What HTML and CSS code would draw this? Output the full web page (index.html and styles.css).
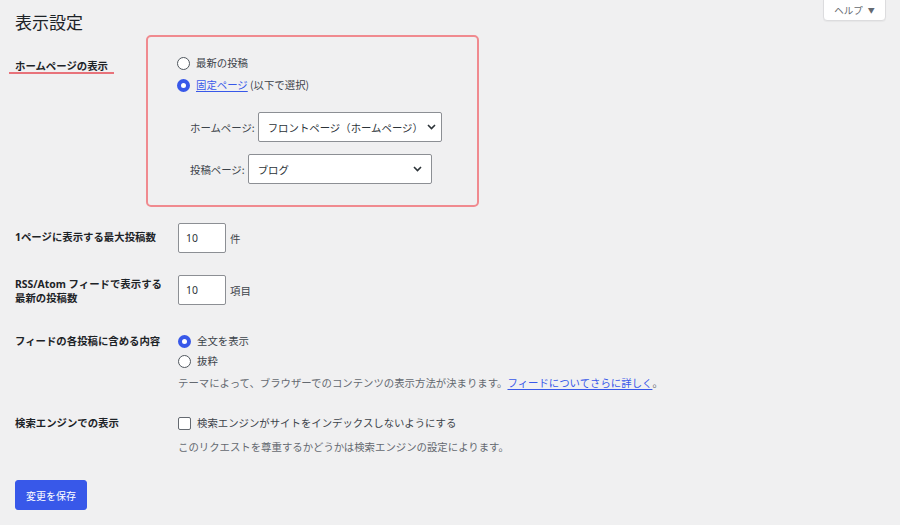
FILE: index.html
```html
<!DOCTYPE html>
<html lang="ja">
<head>
<meta charset="utf-8">
<title>表示設定</title>
<link rel="stylesheet" href="styles.css">
</head>
<body>
<header class="header">
  <h1 class="title">表示設定</h1>
  <button class="help" type="button">ヘルプ <span class="help-arrow">▼</span></button>
</header>

<form class="settings">
  <div class="row-home">
    <div class="home-label"><span class="underlined">ホームページの表示</span></div>
    <div class="highlight-box">
      <label class="choice choice-home"><input type="radio" name="front" class="radio"> 最新の投稿</label>
      <label class="choice choice-home"><input type="radio" name="front" class="radio" checked> <a href="#" class="link">固定ページ</a>&nbsp;(以下で選択)</label>
      <div class="page-select first">
        <span class="select-label">ホームページ:</span>
        <div class="select wide">
          <span>フロントページ（ホームページ）</span>
          <svg class="chev" width="9" height="6" viewBox="0 0 9 6"><path d="M1 1 L4.5 4.5 L8 1" fill="none" stroke="#2c3338" stroke-width="1.6"/></svg>
        </div>
      </div>
      <div class="page-select second">
        <span class="select-label">投稿ページ:</span>
        <div class="select">
          <span>ブログ</span>
          <svg class="chev" width="9" height="6" viewBox="0 0 9 6"><path d="M1 1 L4.5 4.5 L8 1" fill="none" stroke="#2c3338" stroke-width="1.6"/></svg>
        </div>
      </div>
    </div>
  </div>

  <div class="row row-posts">
    <div class="row-label pt7">1ページに表示する最大投稿数</div>
    <div class="field field-inline">
      <input class="num" type="text" value="10"><span class="unit">件</span>
    </div>
  </div>

  <div class="row row-rss">
    <div class="row-label pt2">RSS/Atom フィードで表示する最新の投稿数</div>
    <div class="field field-inline">
      <input class="num" type="text" value="10"><span class="unit">項目</span>
    </div>
  </div>

  <div class="row row-feed">
    <div class="row-label pt3">フィードの各投稿に含める内容</div>
    <div class="field">
      <label class="choice"><input type="radio" name="feed" class="radio" checked> 全文を表示</label>
      <label class="choice"><input type="radio" name="feed" class="radio"> 抜粋</label>
      <p class="desc desc-feed">テーマによって、ブラウザーでのコンテンツの表示方法が決まります。<a href="#" class="link">フィードについてさらに詳しく</a>。</p>
    </div>
  </div>

  <div class="row row-search">
    <div class="row-label pt3">検索エンジンでの表示</div>
    <div class="field">
      <label class="choice"><input type="checkbox" class="check"> 検索エンジンがサイトをインデックスしないようにする</label>
      <p class="desc desc-search">このリクエストを尊重するかどうかは検索エンジンの設定によります。</p>
    </div>
  </div>

  <button class="save" type="button">変更を保存</button>
</form>
</body>
</html>
```

FILE: styles.css
```css
html, body {
  margin: 0;
  padding: 0;
  background: #f0f0f1;
}

body {
  font-family: "Noto Sans", "Noto Sans CJK JP", sans-serif;
  font-size: 10.4px;
  color: #3c434a;
  width: 900px;
  height: 525px;
  overflow: hidden;
}

.header {
  display: flex;
  justify-content: space-between;
  align-items: flex-start;
  padding: 0 14px 0 15px;
}

.title {
  margin: 12px 0 0;
  font-size: 17px;
  line-height: 20px;
  font-weight: 400;
  color: #1d2327;
  font-family: "Noto Sans CJK JP", sans-serif;
}

.help {
  margin-top: -1px;
  width: 63px;
  height: 22px;
  background: #fff;
  border: 1px solid #dcdcde;
  border-radius: 0 0 4px 4px;
  box-shadow: 0 1px 1px rgba(0,0,0,0.04);
  font-family: "Noto Sans CJK JP", sans-serif;
  font-size: 9.5px;
  color: #646970;
  padding: 0;
  line-height: 20px;
}

.help-arrow {
  font-size: 7px;
  margin-left: 3px;
  vertical-align: 1px;
}

.settings {
  padding-left: 15px;
}

/* Row 1 with highlight */
.row-home {
  display: flex;
  margin-top: 3px;
}

.home-label {
  width: 131px;
  flex-shrink: 0;
  padding-top: 23px;
  font-weight: 700;
  color: #1d2327;
  font-family: "Noto Sans CJK JP", sans-serif;
}

.underlined {
  display: inline-block;
  line-height: 13px;
  margin-left: -6px;
  padding: 0 6px 0 6px;
  border-bottom: 2px solid #e8727a;
}

.highlight-box {
  width: 333px;
  box-sizing: border-box;
  border: 2px solid #f08a8f;
  border-radius: 5px;
  padding: 15px 10px 21px 29px;
}

.choice {
  display: flex;
  align-items: center;
  height: 20px;
  line-height: 20px;
  color: #3c434a;
  font-family: "Noto Sans CJK JP", sans-serif;
  white-space: nowrap;
}

.choice-home {
  height: 22px;
  line-height: 22px;
}

.radio, .check {
  appearance: none;
  -webkit-appearance: none;
  margin: 0 6px 0 0;
  width: 13px;
  height: 13px;
  box-sizing: border-box;
  background: #fff;
  border: 1px solid #50575e;
  flex-shrink: 0;
}

.radio {
  border-radius: 50%;
}

.radio:checked {
  border: 4px solid #3858e9;
}

.check {
  border-radius: 2px;
  border-color: #646970;
}

.link {
  color: #3858e9;
  text-decoration: underline;
  text-underline-offset: 2px;
}

.page-select {
  display: flex;
  align-items: center;
  padding-left: 13px;
  color: #3c434a;
  font-family: "Noto Sans CJK JP", sans-serif;
}

.page-select.first {
  margin-top: 16px;
}

.page-select.second {
  margin-top: 12px;
}

.select-label {
  margin-right: 3px;
}

.select {
  display: flex;
  align-items: center;
  justify-content: space-between;
  width: 184px;
  height: 30px;
  box-sizing: border-box;
  background: #fff;
  border: 1px solid #8c8f94;
  border-radius: 2px;
  padding: 0 9px 0 9px;
  color: #2c3338;
  white-space: nowrap;
}

.select.wide {
  padding: 0 7px 0 9px;
}

.chev {
  flex-shrink: 0;
  margin-left: 4px;
}

/* generic rows */
.row {
  display: flex;
  align-items: flex-start;
}

.row-label {
  width: 150px;
  margin-right: 13px;
  flex-shrink: 0;
  font-weight: 700;
  color: #1d2327;
  line-height: 14px;
  font-family: "Noto Sans", "Noto Sans CJK JP", sans-serif;
}

.pt7 { padding-top: 7px; }
.pt2 { padding-top: 2px; }
.pt3 { padding-top: 3px; }

.row-posts { margin-top: 16px; }
.row-rss { margin-top: 22px; }
.row-feed { margin-top: 26px; }
.row-search { margin-top: 22px; }

.field-inline {
  display: flex;
  align-items: center;
}

.num {
  width: 48px;
  height: 30px;
  box-sizing: border-box;
  border: 1px solid #8c8f94;
  border-radius: 2px;
  background: #fff;
  padding: 0 0 0 7px;
  margin: 0;
  font-family: "Noto Sans", "Noto Sans CJK JP", sans-serif;
  font-size: 10.4px;
  color: #2c3338;
}

.unit {
  margin-left: 4px;
  color: #3c434a;
  font-family: "Noto Sans CJK JP", sans-serif;
}

.desc {
  margin: 0;
  line-height: 16px;
  color: #646970;
  font-family: "Noto Sans CJK JP", sans-serif;
  white-space: nowrap;
}

.desc-feed { margin-top: 4px; }
.desc-search { margin-top: 6px; }

.save {
  display: block;
  margin-top: 25px;
  width: 72px;
  height: 30px;
  background: #3858e9;
  border: 1px solid #3858e9;
  border-radius: 3px;
  color: #fff;
  font-family: "Noto Sans CJK JP", sans-serif;
  font-size: 10px;
  padding: 0;
}
```
